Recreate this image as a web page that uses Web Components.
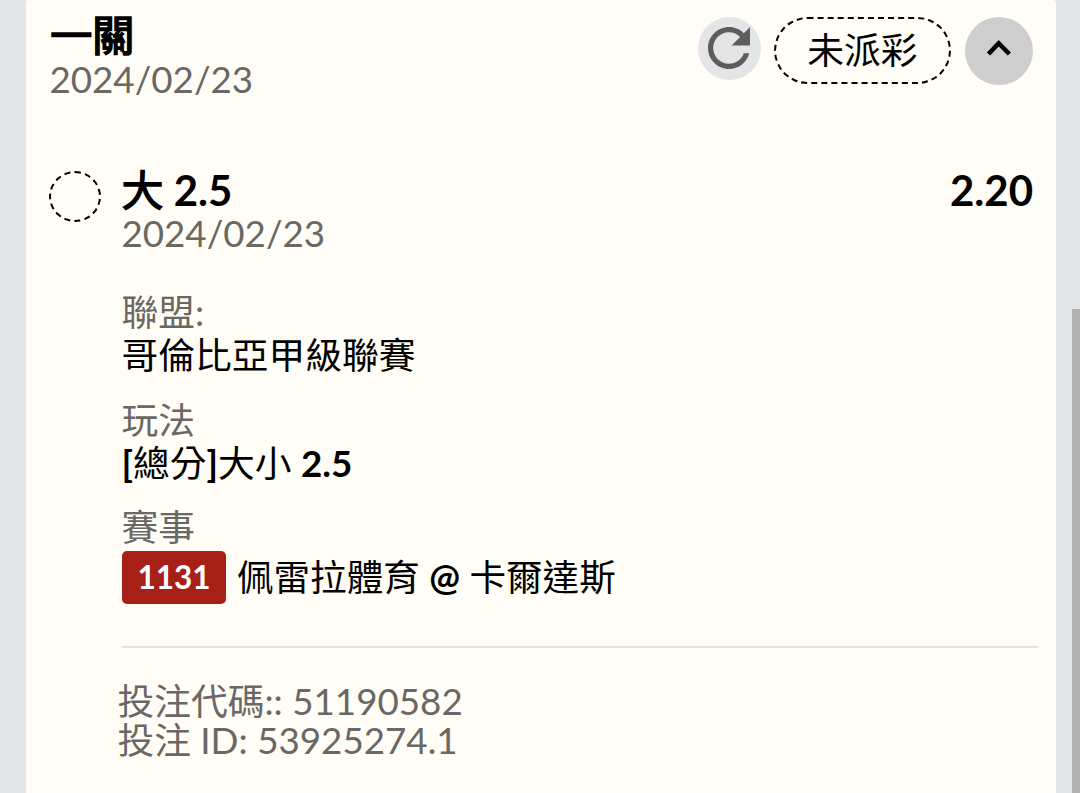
<!DOCTYPE html>
<html lang="zh-Hant"><head><meta charset="utf-8"><title>注單</title>
<style>
html,body{margin:0;height:100%;overflow:hidden;background:#e4e5e7}
body{font-family:Lato,"Noto Sans CJK TC",sans-serif;color:#000}
</style></head><body>
<bet-page></bet-page>
<script>
const define=(name,html)=>{
  const t=document.createElement('template');t.innerHTML=html;
  customElements.define(name,class extends HTMLElement{
    constructor(){super();this.attachShadow({mode:'open'}).appendChild(t.content.cloneNode(true));}
  });
};
define('text-line',`<style>
:host{display:block;white-space:pre;font-size:36.75px;line-height:44px;height:44px;text-indent:-.6px}
:host([muted]){color:#696864}
:host([big]){font-size:42px;font-weight:700;height:42px;line-height:42px}
</style><slot></slot>`);
define('cjk-strong',`<style>
:host{font-weight:400;-webkit-text-stroke:var(--stroke,1.3px) #000}
</style><slot></slot>`);
define('refresh-button',`<style>
:host{display:block;width:63px;height:63px;border-radius:50%;background:#e4e5e7}
svg{display:block}
</style><svg width="63" height="63" viewBox="0 0 63 63"><path transform="translate(-.5 -.5) scale(2.625)" d="M17.650 6.350C16.200 4.900 14.210 4 12 4c-4.420 0-7.990 3.580-7.990 8s3.570 8 7.990 8c3.730 0 6.840-2.550 7.730-6h-2.080c-.82 2.330-3.040 4-5.650 4-3.310 0-6-2.690-6-6s2.690-6 6-6c1.660 0 3.140.69 4.220 1.780L13 11h7V4l-2.350 2.350z" fill="#5d5d5d"/></svg>`);
define('status-pill',`<style>
:host{display:flex;box-sizing:border-box;width:177px;height:67px;border:2px dashed #000;border-radius:34px;align-items:center;justify-content:center;font-size:36.750px;line-height:44px;padding-bottom:1px}
</style><slot></slot>`);
define('collapse-button',`<style>
:host{display:block;width:68px;height:68px;border-radius:50%;background:#cecece}
svg{display:block}
</style><svg width="68" height="68" viewBox="0 0 68 68"><path d="M23.500 37L33.700 26.200L44.300 37" fill="none" stroke="#000" stroke-width="4.600"/></svg>`);
define('status-ring',`<style>
:host{display:block;box-sizing:border-box;width:52px;height:51px;border:2px dashed #000;border-radius:50%}
</style>`);
define('match-code',`<style>
:host{display:block;width:104px;height:53px;border-radius:5px;background:#a62017;color:#fff;font-size:31.500px;font-weight:700;line-height:52px;text-align:center}
</style><slot></slot>`);
define('detail-field',`<style>
:host{display:block;height:107.500px}
::slotted([slot=label]){color:#696864}
</style><slot name="label"></slot><slot></slot>`);
define('bet-page',`<style>
:host{display:grid;grid-template-columns:26px 1030px 16px 8px;height:793px}
main{grid-column:2;background:#fffdf6;border-radius:3px 3px 0 0}
.bar{grid-column:4;margin-top:309px;background:#b1b1b1}
header{display:flex;height:153px;padding:15px 23px 0 24px;box-sizing:border-box}
header text-line[big]{line-height:40px;text-indent:.2px}
header cjk-strong{--stroke:1.7px}
.when{flex:1}
.when text-line[muted],.pick text-line[muted]{line-height:45px}
.tools{display:flex;align-items:flex-start;padding-top:2px}
.pill{margin:0 14px 0 13px}
.sel{display:flex;padding:16px 23px 0 23px}
.ring{margin:2px 21px 0 0}
.pick{flex:1}
.details{padding:35px 0 0 96px}
.details detail-field text-line:not([slot]){line-height:43px}
.match{display:flex;gap:11.500px;padding-top:2px}
.match text-line{height:53px;line-height:52px;font-size:36.600px}
.rule{height:2px;width:916px;background:#e5e3dd;margin:42px 0 0 96px}
footer{padding:34px 0 0 92px}
footer text-line{height:39px;line-height:39px}
</style>
<main>
<header><div class="when"><text-line big><cjk-strong>一關</cjk-strong></text-line><text-line muted>2024/02/23</text-line></div>
<div class="tools"><refresh-button></refresh-button><status-pill class="pill">未派彩</status-pill><collapse-button></collapse-button></div></header>
<section class="sel"><status-ring class="ring"></status-ring><div class="pick"><text-line big><cjk-strong>大</cjk-strong> 2.5</text-line><text-line muted>2024/02/23</text-line></div><text-line big>2.20</text-line></section>
<section class="details">
<detail-field><text-line slot="label">聯盟:</text-line><text-line>哥倫比亞甲級聯賽</text-line></detail-field>
<detail-field><text-line slot="label">玩法</text-line><text-line><b>[</b>總分<b>]</b>大小 <b>2.5</b></text-line></detail-field>
<text-line muted>賽事</text-line>
<div class="match"><match-code>1131</match-code><text-line>佩雷拉體育 <b>@</b> 卡爾達斯</text-line></div>
</section>
<div class="rule"></div>
<footer><text-line muted>投注代碼:: 51190582</text-line><text-line muted>投注 ID: 53925274.1</text-line></footer>
</main><div class="bar"></div>`);
</script></body></html>
